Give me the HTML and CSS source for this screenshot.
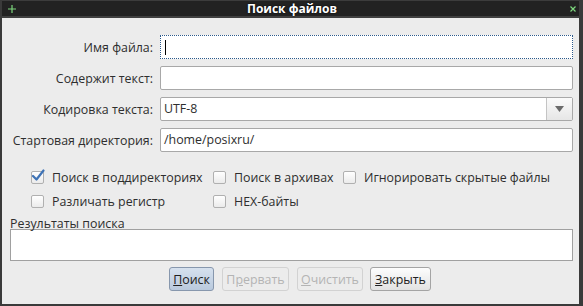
FILE: index.html
```html
<!DOCTYPE html>
<html lang="ru">
<head>
    <meta charset="UTF-8">
    <title>Поиск файлов</title>
    <link rel="stylesheet" href="styles.css">
</head>
<body>
    <div class="window">
        <div class="titlebar">
            <span class="tb-plus">
                <svg width="8" height="8" viewBox="0 0 8 8"><path d="M4 0V8M0 4H8" stroke="#7dd67d" stroke-width="1.2"/></svg>
            </span>
            <span class="tb-title">Поиск файлов</span>
            <span class="tb-close">
                <svg width="6" height="6" viewBox="0 0 6 6"><path d="M0.5 0.5L5.5 5.5M5.5 0.5L0.5 5.5" stroke="#7dd67d" stroke-width="1.2"/></svg>
            </span>
        </div>

        <div class="content">
            <div class="form">
                <label class="label">Имя файла:</label>
                <div class="field focused"><span class="caret"></span></div>

                <label class="label">Содержит текст:</label>
                <div class="field"></div>

                <label class="label">Кодировка текста:</label>
                <div class="combo">
                    <div class="combo-text">UTF-8</div>
                    <div class="combo-btn">
                        <svg width="9" height="6" viewBox="0 0 9 6"><path d="M0 0H9L4.5 6Z" fill="#6a6a6a"/></svg>
                    </div>
                </div>

                <label class="label">Стартовая директория:</label>
                <div class="field">/home/posixru/</div>
            </div>

            <div class="options">
                <div class="check"><span class="box checked">
                    <svg width="14" height="13" viewBox="0 0 14 13"><path d="M2 7L5.5 10.5L12.5 1.5" fill="none" stroke="#3f73b6" stroke-width="2.2" stroke-linecap="round" stroke-linejoin="round"/></svg>
                </span>Поиск в поддиректориях</div>
                <div class="check"><span class="box"></span>Поиск в архивах</div>
                <div class="check"><span class="box"></span>Игнорировать скрытые файлы</div>
                <div class="check"><span class="box"></span>Различать регистр</div>
                <div class="check"><span class="box"></span>HEX-байты</div>
            </div>

            <div class="results-label">Результаты поиска</div>
            <div class="results"></div>

            <div class="buttons">
                <button class="btn btn-search default"><u>П</u>оиск</button>
                <button class="btn btn-stop" disabled>П<u>р</u>ервать</button>
                <button class="btn btn-clear" disabled><u>О</u>чистить</button>
                <button class="btn btn-close"><u>З</u>акрыть</button>
            </div>
        </div>
    </div>
</body>
</html>
```

FILE: styles.css
```css
body {
    margin: 0;
    background-color: #3a3a3a;
    font-family: "Open Sans", sans-serif;
    font-size: 12.4px;
    color: #2e2e2e;
}
.window {
    width: 583px;
    height: 306px;
    box-sizing: border-box;
    border-left: 2px solid #3a3a3a;
    border-right: 4px solid #3a3a3a;
    border-bottom: 2px solid #3a3a3a;
    display: flex;
    flex-direction: column;
}
.titlebar {
    height: 15px;
    background-color: #222;
    border-top: 1px solid #3c3c3c;
    border-bottom: 2px solid #404040;
    display: flex;
    align-items: center;
    padding: 0 3px 0 6px;
}
.tb-plus {
    display: flex;
    width: 10px;
}
.tb-title {
    flex: 1;
    text-align: center;
    color: #fff;
    font-weight: bold;
    font-size: 12px;
    text-shadow: 0 0 2px #000;
}
.tb-close {
    display: flex;
    width: 10px;
    justify-content: flex-end;
}
.content {
    flex: 1;
    background-color: #ececec;
    padding: 17px 6px 0 8px;
}
.form {
    display: grid;
    grid-template-columns: 143px 1fr;
    column-gap: 7px;
    row-gap: 7px;
    align-items: center;
}
.label {
    text-align: right;
    white-space: nowrap;
}
.field {
    height: 22px;
    line-height: 22px;
    border: 1px solid #a8a8a8;
    border-radius: 2px;
    background-color: #fff;
    padding: 0 3px;
    display: flex;
    align-items: center;
}
.field.focused {
    border: 1px dotted #2c5a8c;
    border-radius: 0;
}
.caret {
    width: 1px;
    height: 15px;
    background-color: #000;
    margin-left: 1px;
}
.combo {
    height: 22px;
    display: flex;
    border: 1px solid #a8a8a8;
    border-radius: 2px;
    background-color: #fff;
}
.combo-text {
    flex: 1;
    line-height: 22px;
    padding: 0 3px;
}
.combo-btn {
    width: 25px;
    border-left: 1px solid #c4c4c4;
    background: linear-gradient(#fafafa, #e6e6e6);
    display: flex;
    align-items: center;
    justify-content: center;
}
.options {
    display: grid;
    grid-template-columns: 182px 130px auto;
    row-gap: 4px;
    padding: 15px 0 0 21px;
}
.check {
    display: flex;
    align-items: center;
    height: 20px;
    white-space: nowrap;
}
.box {
    position: relative;
    width: 11px;
    height: 11px;
    border: 1px solid #b0b0b0;
    border-radius: 2px;
    background: linear-gradient(#fff, #ebebeb);
    margin-right: 8px;
    flex: none;
}
.box svg {
    position: absolute;
    left: -1px;
    top: -3px;
}
.results-label {
    margin-top: 8px;
    line-height: 10px;
}
.results {
    height: 30px;
    border: 1px solid #a0a0a0;
    background-color: #fff;
}
.buttons {
    display: flex;
    gap: 8px;
    padding: 6px 0 0 159px;
}
.btn {
    height: 24px;
    padding: 0;
    font-family: "Open Sans", sans-serif;
    font-size: 12.4px;
    color: #202020;
    border: 1px solid #a4a4a4;
    border-radius: 3px;
    background: linear-gradient(#fdfdfd, #e2e2e2);
}
.btn-search { width: 45px; }
.btn-stop { width: 67px; }
.btn-clear { width: 66px; }
.btn-close { width: 61px; margin-left: -1px; }
.btn.default {
    border-color: #8797ad;
    background: linear-gradient(#d6e1ee, #b9c9dd);
}
.btn:disabled {
    color: #b4b4b4;
    border-color: #d2d2d2;
    background: #ececec;
}
```
